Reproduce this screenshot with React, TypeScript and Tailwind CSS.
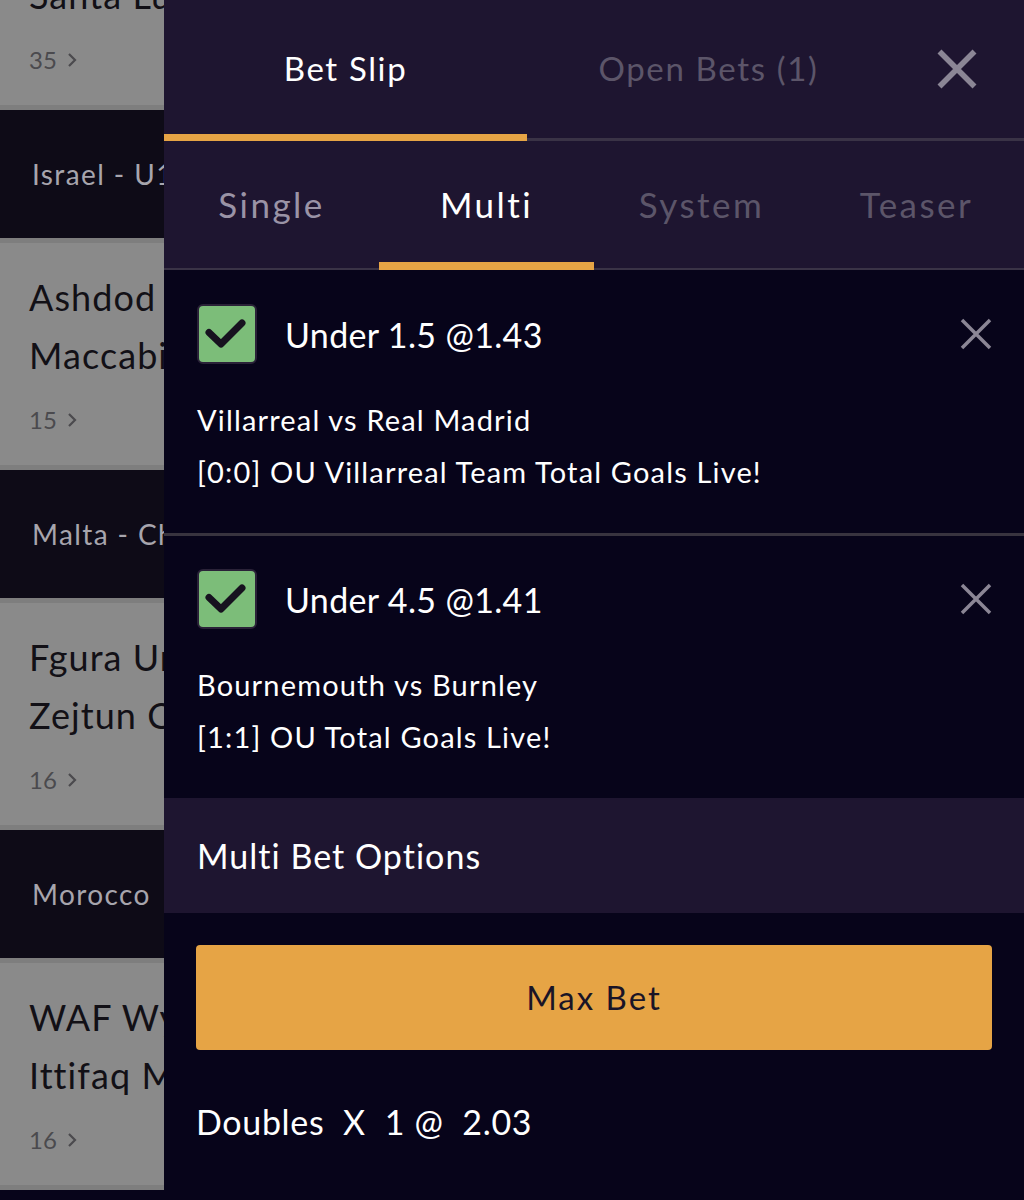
import React from "react";

const font = { fontFamily: "Lato, 'Noto Sans', sans-serif" };

type Match = { lines: string[]; count: number };
type League = { name: string; match: Match };

const leagues: League[] = [
  { name: "Israel - U19", match: { lines: ["Ashdod", "Maccabi"], count: 15 } },
  { name: "Malta - Challenge", match: { lines: ["Fgura United", "Zejtun Corinthians"], count: 16 } },
  { name: "Morocco", match: { lines: ["WAF Wydad", "Ittifaq Marrakech"], count: 16 } },
];

const bets = [
  {
    title: "Under 1.5 @1.43",
    teams: "Villarreal vs Real Madrid",
    market: "[0:0] OU Villarreal Team Total Goals Live!",
  },
  {
    title: "Under 4.5 @1.41",
    teams: "Bournemouth vs Burnley",
    market: "[1:1] OU Total Goals Live!",
  },
];

const MatchCard = ({ lines, count, first }: Match & { first?: boolean }) => (
  <div
    className={`bg-[#8a8a8a] border-y-[5px] border-[#7e7e7e] pl-[29px] pt-[25px] pb-[25px] whitespace-nowrap ${
      first ? "-mt-[122px]" : ""
    }`}
  >
    {lines.map((l) => (
      <div key={l} className="text-[36px] leading-[58px] tracking-[0.03em] text-[#121016]">
        {l}
      </div>
    ))}
    <div className="mt-[16px] text-[24px] leading-[40px] text-[#4b4a4e] flex items-center gap-[10px]">
      <span>{count}</span>
      <svg width="10" height="16" viewBox="0 0 10 16" fill="none">
        <path d="M2 2l6 6-6 6" stroke="#4b4a4e" strokeWidth="2.2" />
      </svg>
    </div>
  </div>
);

const CloseIcon = ({ size, stroke, color }: { size: number; stroke: number; color: string }) => (
  <svg width={size} height={size} viewBox="0 0 32 32" fill="none">
    <path d="M2 2L30 30M30 2L2 30" stroke={color} strokeWidth={stroke} />
  </svg>
);

const Checkbox = () => (
  <div className="w-[60px] h-[60px] rounded-[6px] bg-[#7cbd79] border-2 border-[#2a2238] shrink-0 overflow-hidden">
    <svg width="56" height="56" viewBox="2 2 56 56" fill="none">
      <path
        d="M12 28.5L24 40L45 19"
        stroke="#17121f"
        strokeWidth="7"
        strokeLinecap="round"
        strokeLinejoin="round"
      />
    </svg>
  </div>
);

export default function App() {
  return (
    <div className="w-[1024px] h-[1200px] overflow-hidden flex bg-[#07041a]" style={font}>
      {/* background list, dimmed */}
      <div className="w-[164px] shrink-0 overflow-hidden flex flex-col">
        <MatchCard lines={["Hibernians", "Santa Lucia"]} count={35} first />
        {leagues.map((lg) => (
          <React.Fragment key={lg.name}>
            <div className="h-[128px] bg-[#0e0b17] flex items-center pl-[32px] whitespace-nowrap text-[28px] tracking-[0.05em] text-[#a7a5ad]">
              {lg.name}
            </div>
            <MatchCard {...lg.match} />
          </React.Fragment>
        ))}
      </div>

      {/* bet slip */}
      <div className="flex-1 flex flex-col">
        <div className="bg-[#1e1530]">
          <div className="h-[141px] flex border-b-[3px] border-[#3a3346]">
            <div className="w-[363px] relative flex items-center justify-center text-[33px] tracking-[0.05em] text-white">
              Bet Slip
              <div className="absolute left-0 right-0 -bottom-[3px] h-[7px] bg-[#e6a445]" />
            </div>
            <div className="w-[363px] flex items-center justify-center text-[33px] tracking-[0.05em] text-[#5c5569]">
              Open Bets (1)
            </div>
            <div className="flex-1 flex items-center justify-center">
              <CloseIcon size={40} stroke={4.5} color="#8b8695" />
            </div>
          </div>
          <div className="h-[129px] flex border-b-2 border-[#3a3346]">
            {["Single", "Multi", "System", "Teaser"].map((t) => (
              <div
                key={t}
                className={`flex-1 relative flex items-center justify-center text-[35px] tracking-[0.07em] ${
                  t === "Multi" ? "text-white" : t === "Single" ? "text-[#9a93a6]" : "text-[#5c5569]"
                }`}
              >
                {t}
                {t === "Multi" && (
                  <div className="absolute left-0 right-0 -bottom-[2px] h-[8px] bg-[#e6a445]" />
                )}
              </div>
            ))}
          </div>
        </div>

        {bets.map((b, i) => (
          <div
            key={b.title}
            className={`pl-[33px] pr-[32px] pb-[35px] text-white ${
              i === 0 ? "pt-[34px] border-b-[3px] border-[#38343f]" : "pt-[33px]"
            }`}
          >
            <div className="flex items-center">
              <Checkbox />
              <div className="ml-[28px] flex-1 text-[34px] tracking-[0.01em]">{b.title}</div>
              <CloseIcon size={32} stroke={3.5} color="#8b8695" />
            </div>
            <div className="mt-[30px] text-[29px] leading-[52px] tracking-[0.04em]">{b.teams}</div>
            <div className="text-[29px] leading-[52px] tracking-[0.04em]">{b.market}</div>
          </div>
        ))}

        <div className="h-[115px] bg-[#1e1530] flex items-center pl-[33px] text-[34px] tracking-[0.03em] text-white">
          Multi Bet Options
        </div>

        <div className="px-[32px] pt-[32px]">
          <button className="w-full h-[105px] rounded-[4px] bg-[#e6a445] text-[#1a1426] text-[33px] tracking-[0.06em]">
            Max Bet
          </button>
          <div className="mt-[46px] text-[34px] tracking-[0.02em] text-white whitespace-pre">
            Doubles  X  1 @  2.03
          </div>
        </div>
      </div>
    </div>
  );
}
